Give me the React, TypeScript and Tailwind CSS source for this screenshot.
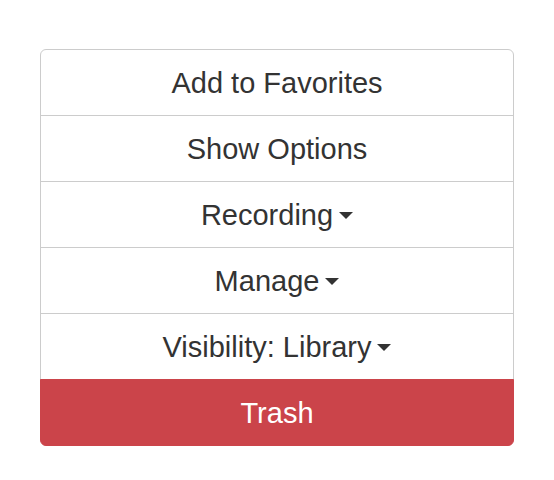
const items = [
  { label: "Add to Favorites" },
  { label: "Show Options" },
  { label: "Recording", caret: true },
  { label: "Manage", caret: true },
  { label: "Visibility: Library", caret: true },
];

function Caret() {
  return (
    <span className="ml-[6px] mb-[2px] inline-block h-0 w-0 border-x-[7px] border-t-[7px] border-solid border-x-transparent border-t-[#333]" />
  );
}

export default function App() {
  return (
    <div className="min-h-[480px] bg-white px-[40px] pt-[49px] font-['Liberation_Sans',Arial,sans-serif]">
      <div className="flex w-[474px] flex-col">
        {items.map((item, i) => (
          <button
            key={item.label}
            type="button"
            className={
              "flex h-[67px] items-center justify-center border border-[#ccc] bg-white pt-[3px] text-[29px] text-[#333] " +
              (i === 0 ? "rounded-t-[6px]" : "-mt-px")
            }
          >
            {item.label}
            {item.caret && <Caret />}
          </button>
        ))}
        <button
          type="button"
          className="-mt-px flex h-[67px] items-center justify-center rounded-b-[6px] border border-[#cb444a] bg-[#cb444a] pt-[3px] text-[29px] text-white"
        >
          Trash
        </button>
      </div>
    </div>
  );
}
